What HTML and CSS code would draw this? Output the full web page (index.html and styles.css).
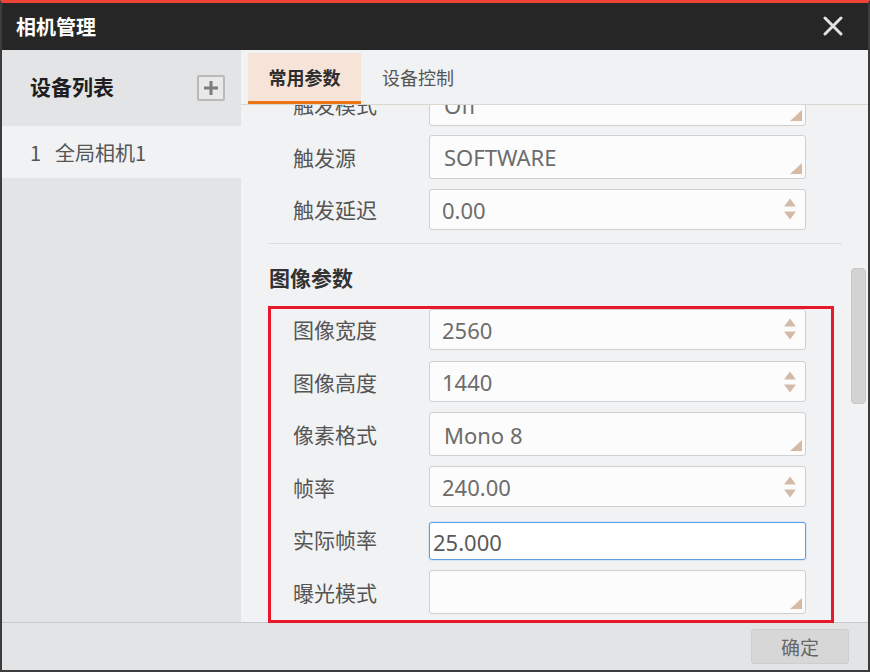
FILE: index.html
```html
<!DOCTYPE html>
<html lang="zh-CN">
<head>
<meta charset="utf-8">
<title>相机管理</title>
<link rel="stylesheet" href="styles.css">
</head>
<body>
<div class="window">
  <div class="titlebar">
    <span class="title">相机管理</span>
    <svg class="close" width="20" height="20" viewBox="0 0 20 20"><path d="M2 2 L18 18 M18 2 L2 18" stroke="#e2e2e2" stroke-width="3" stroke-linecap="round"/></svg>
  </div>
  <div class="main">
    <aside class="sidebar">
      <div class="side-head">
        <span class="side-title">设备列表</span>
        <span class="add-btn"><svg width="16" height="16" viewBox="0 0 16 16"><path d="M8 1 V15 M1 8 H15" stroke="#7d7d7d" stroke-width="3"/></svg></span>
      </div>
      <div class="device"><span class="dev-no">1</span>全局相机1</div>
    </aside>
    <section class="panel">
      <div class="tabs">
        <div class="tab active">常用参数</div>
        <div class="tab">设备控制</div>
      </div>
      <div class="body">
        <div class="content">
          <div class="scroller">
            <div class="row"><span class="label">触发模式</span><div class="field combo"><span class="val">Off</span><i class="corner"></i></div></div>
            <div class="row"><span class="label">触发源</span><div class="field combo"><span class="val">SOFTWARE</span><i class="corner"></i></div></div>
            <div class="row"><span class="label">触发延迟</span><div class="field spin"><span class="val">0.00</span><i class="arrows"><b class="up"></b><b class="down"></b></i></div></div>
            <div class="sep"></div>
            <div class="group-title">图像参数</div>
            <div class="row"><span class="label">图像宽度</span><div class="field spin"><span class="val">2560</span><i class="arrows"><b class="up"></b><b class="down"></b></i></div></div>
            <div class="row"><span class="label">图像高度</span><div class="field spin"><span class="val">1440</span><i class="arrows"><b class="up"></b><b class="down"></b></i></div></div>
            <div class="row"><span class="label">像素格式</span><div class="field combo"><span class="val">Mono 8</span><i class="corner"></i></div></div>
            <div class="row"><span class="label">帧率</span><div class="field spin"><span class="val">240.00</span><i class="arrows"><b class="up"></b><b class="down"></b></i></div></div>
            <div class="row"><span class="label">实际帧率</span><div class="field edit"><span class="val">25.000</span></div></div>
            <div class="row"><span class="label">曝光模式</span><div class="field combo"><span class="val"></span><i class="corner"></i></div></div>
          </div>
        </div>
        <div class="vscroll"><div class="thumb"></div></div>
      </div>
    </section>
  </div>
  <div class="footer"><span class="ok">确定</span></div>
  <div class="highlight"></div>
</div>
</body>
</html>
```
FILE: styles.css
```css
* { box-sizing: border-box; }
html, body { margin: 0; padding: 0; }
body {
  width: 870px;
  height: 672px;
  overflow: hidden;
  font-family: "Noto Sans", "Noto Sans CJK SC", sans-serif;
  background: #3a3a3a;
}
.window {
  position: relative;
  width: 870px;
  height: 672px;
  display: flex;
  flex-direction: column;
  border: 2px solid #3c3c3c;
  border-top: 3px solid #ee4336;
  background: #f1f2f4;
}
.titlebar {
  height: 47px;
  flex: none;
  background: #262626;
  display: flex;
  align-items: center;
  justify-content: space-between;
  padding: 0 25px 0 14px;
}
.title {
  color: #fff;
  font-family: "Noto Sans CJK SC", sans-serif;
  font-weight: 700;
  font-size: 20px;
  margin-top: 0;
}
.close { display: block; margin-top: -2px; }
.main {
  flex: 1;
  display: flex;
  min-height: 0;
}
.sidebar {
  width: 239px;
  flex: none;
  background: #e3e4e6;
}
.side-head {
  height: 76px;
  display: flex;
  align-items: center;
  justify-content: space-between;
  padding: 0 16px 0 28px;
}
.side-title {
  font-family: "Noto Sans CJK SC", sans-serif;
  font-weight: 700;
  font-size: 21px;
  color: #1e1e1e;
  margin-top: -4px;
}
.add-btn {
  width: 28px;
  height: 26px;
  border: 2px solid #b9b9b9;
  border-radius: 2px;
  background: #e9e9ea;
  display: flex;
  align-items: center;
  justify-content: center;
}
.add-btn svg { display: block; }
.device {
  height: 52px;
  background: #f1f2f4;
  display: flex;
  align-items: center;
  padding-left: 28px;
  font-family: "Noto Sans CJK SC", sans-serif;
  font-size: 20px;
  color: #555;
}
.dev-no { margin-right: 14px; }
.panel {
  flex: 1;
  display: flex;
  flex-direction: column;
  min-width: 0;
  background: #f1f2f4;
}
.tabs {
  height: 55px;
  flex: none;
  display: flex;
  align-items: flex-end;
  padding-left: 7px;
  border-bottom: 1px solid #dcd6d0;
}
.tab {
  height: 51px;
  padding: 0 21px;
  display: flex;
  align-items: center;
  justify-content: center;
  white-space: nowrap;
  font-family: "Noto Sans CJK SC", sans-serif;
  font-size: 18px;
  color: #555;
  border-bottom: 3px solid transparent;
}
.tab.active {
  width: 113px;
  padding: 0;
  background: #f6e4d8;
  color: #2e2e2e;
  font-weight: 700;
  border-bottom-color: #ec7516;
}
.body {
  flex: 1;
  display: flex;
  min-height: 0;
}
.content {
  flex: 1;
  overflow: hidden;
  padding-left: 27px;
}
.scroller {
  margin-top: -27px;
}
.row {
  height: 52.5px;
  display: flex;
  align-items: center;
  padding-left: 25px;
}
.label {
  width: 136px;
  flex: none;
  font-family: "Noto Sans CJK SC", sans-serif;
  font-size: 21px;
  color: #555;
}
.field {
  position: relative;
  width: 377px;
  border: 1px solid #d0d0d0;
  border-radius: 3px;
  background: #fcfcfc;
  display: flex;
  align-items: center;
  font-size: 22px;
  color: #6c6c6c;
}
.combo { height: 44px; padding-left: 14px; }
.spin { height: 41px; padding-left: 12px; }
.edit {
  height: 38px;
  margin-top: 4px;
  padding-left: 3px;
  background: #fff;
  border-color: #5f9ee0;
  box-shadow: 0 0 0 1px #d7e6f5;
  color: #5a5a5a;
}
.val { line-height: 1; margin-top: 1px; }
.corner {
  position: absolute;
  right: 3px;
  bottom: 4px;
  width: 0;
  height: 0;
  border-left: 12px solid transparent;
  border-bottom: 11px solid #d5baa6;
}
.arrows {
  position: absolute;
  right: 9px;
  top: 50%;
  transform: translateY(-50%);
  display: flex;
  flex-direction: column;
  gap: 5px;
}
.arrows b { display: block; width: 0; height: 0; border-left: 6px solid transparent; border-right: 6px solid transparent; }
.arrows .up { border-bottom: 8px solid #d4baa8; }
.arrows .down { border-top: 8px solid #d4baa8; }
.sep {
  height: 1px;
  background: #dddddd;
  margin-top: 7.5px;
}
.group-title {
  height: 58.75px;
  padding-top: 20px;
  font-family: "Noto Sans CJK SC", sans-serif;
  font-weight: 700;
  font-size: 21px;
  line-height: 26px;
  color: #333;
  padding-left: 1px;
}
.vscroll {
  width: 26px;
  flex: none;
  padding: 163px 2px 0 9px;
}
.thumb {
  height: 136px;
  background: #d3d3d3;
  border: 1px solid #c6c6c6;
  border-radius: 4px;
}
.footer {
  height: 48px;
  flex: none;
  background: #e3e4e6;
  border-top: 1px solid #c9c9c9;
  display: flex;
  align-items: center;
  justify-content: flex-end;
  padding-right: 19px;
}
.ok {
  width: 98px;
  height: 35px;
  display: flex;
  align-items: center;
  justify-content: center;
  background: #d7d7d8;
  border: 1px solid #cdcdcd;
  border-radius: 3px;
  font-family: "Noto Sans CJK SC", sans-serif;
  font-size: 19px;
  color: #666;
}
.highlight {
  position: absolute;
  left: 266px;
  top: 303px;
  width: 566px;
  height: 317px;
  border: 3px solid #e8172a;
  pointer-events: none;
}
```
